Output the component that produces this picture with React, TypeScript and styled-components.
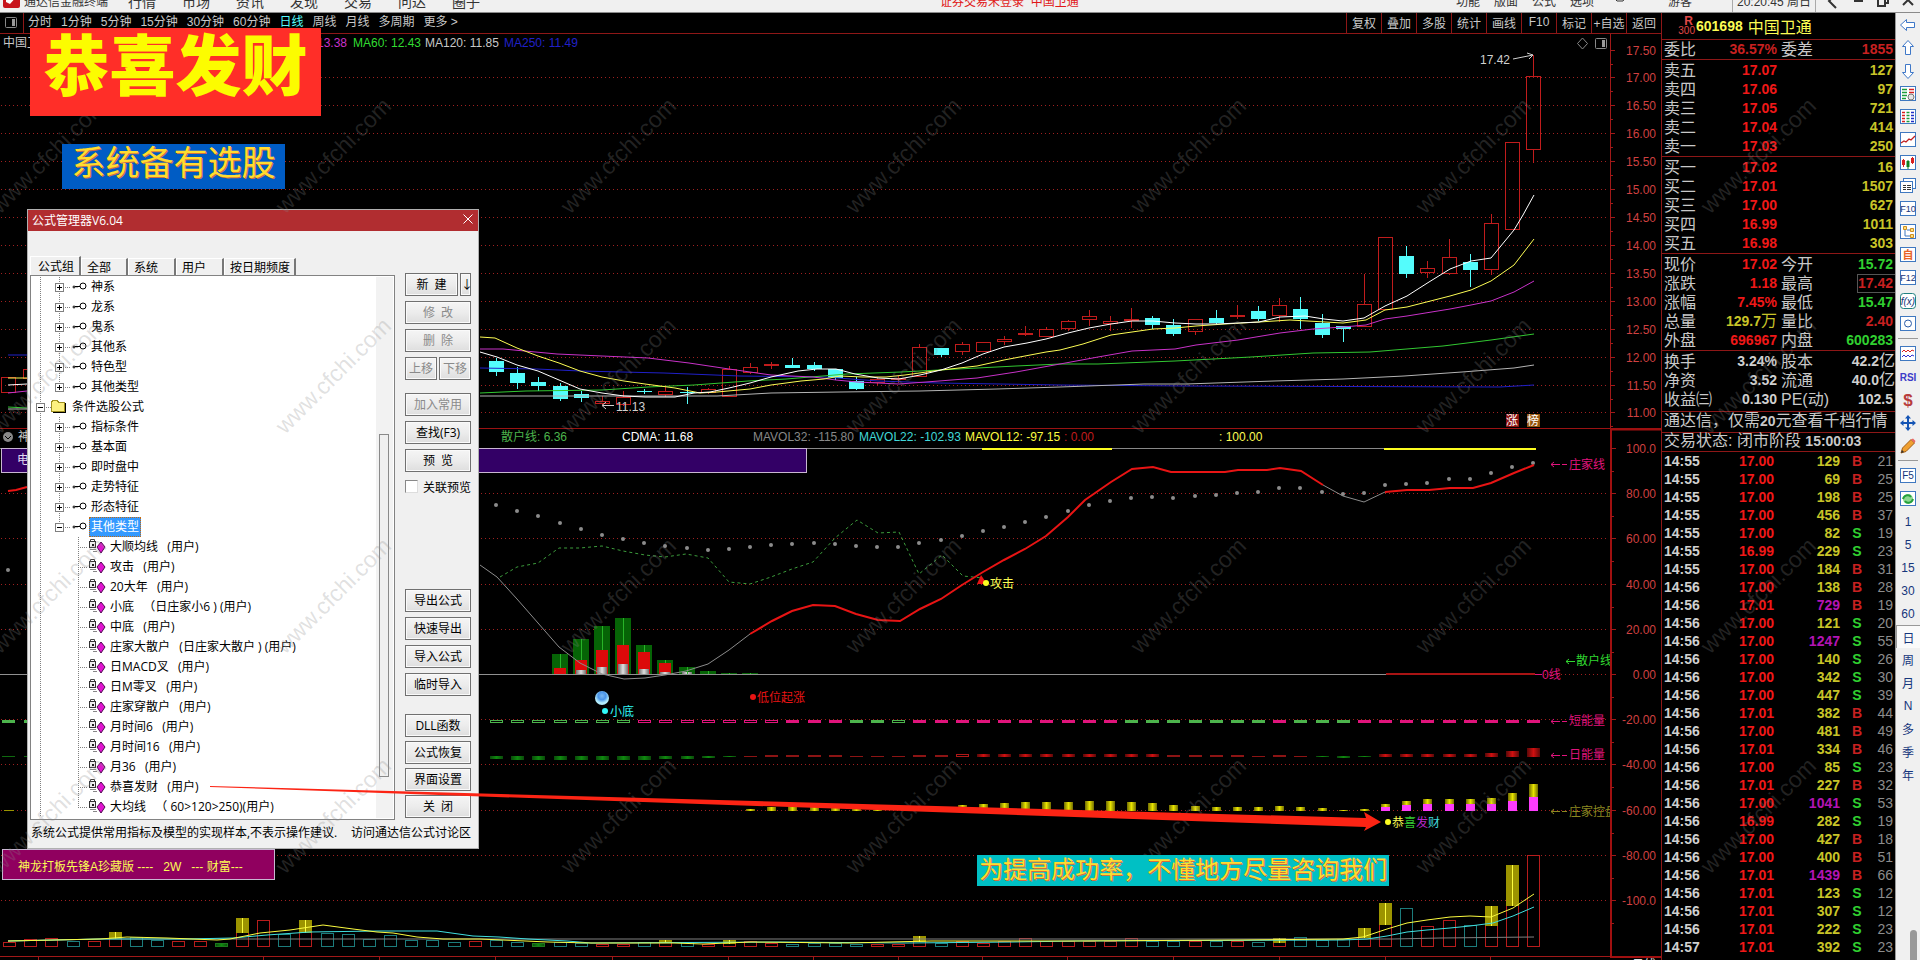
import React from "react";
import styled, { createGlobalStyle, css } from "styled-components";

const Global = createGlobalStyle`
  *, *::before, *::after { box-sizing: border-box; }
  html, body { margin: 0; background: #000; }
  body { font-family: "Liberation Sans", "Noto Sans CJK SC", sans-serif; font-size: 12px; overflow: hidden; }
  button { font-family: inherit; font-size: inherit; color: inherit; background: none; border: 0; padding: 0; margin: 0; }
  table { border-collapse: collapse; border-spacing: 0; table-layout: fixed; width: 100%; }
  td, th { padding: 0; font-weight: inherit; }
`;

const RED_LINE = "#8e1717";

/* ---------- page frame ---------- */

const Page = styled.div`
  position: relative;
  min-height: 100vh;
  overflow: hidden;
  background: #000;
`;

const TopBar = styled.header`
  display: flex;
  align-items: flex-end;
  height: 13px;
  overflow: hidden;
  background: #f0f0f0;
  border-bottom: 1px solid #8a8a8a;
  color: #333;
  line-height: 20px;
`;

const Logo = styled.svg`
  width: 17px;
  height: 20px;
  margin: 0 4px 0 3px;
  flex: none;
`;

const AppName = styled.span`
  width: 104px;
  flex: none;
`;

const MenuItem = styled.button`
  width: 54px;
  flex: none;
  text-align: left;
  font-size: 14px;
  line-height: 20px;
`;

const LoginState = styled.span`
  flex: 1;
  padding-left: 434px;
  color: #e01818;
  white-space: pre;
`;

const SmallMenuItem = styled.button<{ $w?: number }>`
  width: ${(p) => p.$w ?? 38}px;
  flex: none;
  text-align: left;
  line-height: 20px;
`;

const Clock = styled.span`
  width: 84px;
  flex: none;
  margin-right: 4px;
  padding-left: 4px;
  border: solid #aaa;
  border-width: 0 1px;
`;

const WindowButton = styled.button`
  width: 25px;
  height: 20px;
  flex: none;
`;

const Body = styled.div`
  display: grid;
  grid-template-columns: minmax(0, 1fr) 234px 25px;
`;

const Workspace = styled.main`
  min-width: 0;
`;

/* ---------- period bar ---------- */

const PeriodBar = styled.nav`
  display: flex;
  height: 21px;
  padding-bottom: 0;
  border-bottom: 1px solid ${RED_LINE};
  color: #c8c8c8;
  line-height: 18px;
`;

const LayoutToggle = styled.button`
  width: 24px;
  border-right: 1px solid ${RED_LINE};
  display: flex;
  align-items: center;
  justify-content: center;
`;

const Periods = styled.div`
  display: flex;
  align-items: flex-start;
  flex: 1;
  gap: 9px;
  padding-left: 4px;
`;

const Period = styled.button<{ $on?: boolean }>`
  color: ${(p) => (p.$on ? "#54fcfc" : "#c8c8c8")};
  white-space: pre;
  line-height: 19px;
`;

const Tool = styled.button`
  width: 35px;
  padding-bottom: 2px;
  border-left: 1px solid ${RED_LINE};
  white-space: nowrap;
`;

/* ---------- chart panels ---------- */

const Panel = styled.section`
  position: relative;
`;

const Legend = styled.div`
  position: absolute;
  top: 0;
  left: 0;
  display: flex;
  height: 18px;
  line-height: 18px;
  padding-left: 3px;
`;

const LegendItem = styled.span<{ $c: string; $w?: number }>`
  color: ${(p) => p.$c};
  white-space: pre;
  ${(p) => p.$w && css`width: ${p.$w}px;`}
`;

const Canvas = styled.svg`
  display: block;
  width: 100%;
  height: auto;
  font-size: 12px;
`;

/* ---------- quote column ---------- */

const Quote = styled.aside`
  border-left: 1px solid ${RED_LINE};
  color: #c8c8c8;
  font-size: 16px;
  overflow: hidden;
`;

const QuoteHead = styled.div`
  display: flex;
  align-items: center;
  height: 27px;
  border-bottom: 1px solid ${RED_LINE};
  color: #fcfc54;
  padding-left: 17px;
`;

const Tag = styled.span`
  display: flex;
  flex-direction: column;
  align-items: flex-end;
  width: 16px;
  color: #e04848;
  font-size: 10px;
  line-height: 10px;
  b { font-size: 12px; padding-right: 2px; }
`;

const Code = styled.b`
  font-size: 14px;
  padding: 0 5px 0 1px;
`;

const Group = styled.div<{ $top?: number; $bottom?: number }>`
  padding: ${(p) => p.$top ?? 0}px 0 ${(p) => p.$bottom ?? 0}px;
  border-bottom: 1px solid ${RED_LINE};
`;

const Row = styled.tr`
  height: 19px;
  line-height: 19px;
`;

const Label = styled.th<{ $gap?: number }>`
  text-align: left;
  white-space: nowrap;
  font-weight: 400;
  padding-left: ${(p) => p.$gap ?? 2}px;
`;

const Value = styled.td<{ $c: string; $edge?: boolean; $box?: boolean }>`
  text-align: right;
  white-space: nowrap;
  font-size: 14px;
  font-weight: 700;
  color: ${(p) => p.$c};
  padding-right: ${(p) => (p.$edge ? 2 : 0)}px;
  ${(p) => p.$box && css`
    background: linear-gradient(#555, #555) right top / 37px 1px no-repeat,
      linear-gradient(#555, #555) right bottom / 37px 1px no-repeat,
      linear-gradient(#555, #555) calc(100% - 37px) 0 / 1px 100% no-repeat;
  `}
`;

const Unit = styled.span`
  font-size: 16px;
  font-weight: 400;
  line-height: 1;
`;

const Notice = styled.div<{ $h: number }>`
  height: ${(p) => p.$h}px;
  line-height: ${(p) => p.$h - 3}px;
  padding-left: 2px;
  border-bottom: 1px solid ${RED_LINE};
  white-space: nowrap;
  b { font-size: 14px; }
`;

const Tick = styled.tr`
  height: 18px;
  line-height: 18px;
  font-size: 14px;
  font-weight: 700;
`;

const Cell = styled.td<{ $c: string; $align?: string; $thin?: boolean; $pad?: string }>`
  color: ${(p) => p.$c};
  text-align: ${(p) => p.$align ?? "right"};
  font-weight: ${(p) => (p.$thin ? 400 : 700)};
  padding: ${(p) => p.$pad ?? "0"};
`;

/* ---------- side toolbar ---------- */

const Side = styled.nav`
  position: relative;
  background: #f0f0f0;
  border-left: 1px solid #999;
  display: flex;
  flex-direction: column;
  color: #16367c;
`;

const SideButton = styled.button<{ $on?: boolean }>`
  display: flex;
  align-items: center;
  justify-content: center;
  height: 23px;
  flex: none;
  font-size: 12px;
  ${(p) => p.$on && css`
    background: #fafafa;
    border: solid #999;
    border-width: 1px 0 0 1px;
  `}
`;

const SideRule = styled.hr`
  width: 20px;
  height: 1px;
  flex: none;
  margin: 3px auto;
  border: 0;
  background: #999;
`;

const ScrollThumb = styled.div`
  position: absolute;
  right: 3px;
  bottom: 0;
  width: 7px;
  height: 30px;
  border-radius: 4px 4px 0 0;
  background: #999;
`;

/* ---------- overlays ---------- */

const Watermark = styled.svg`
  position: absolute;
  inset: 0;
  width: 100%;
  height: 100%;
  pointer-events: none;
`;

const Banner = styled.div<{ $x: number; $y: number; $w: number; $h: number; $bg: string }>`
  position: absolute;
  left: ${(p) => p.$x}px;
  top: ${(p) => p.$y}px;
  width: ${(p) => p.$w}px;
  height: ${(p) => p.$h}px;
  background: ${(p) => p.$bg};
  text-align: center;
  white-space: nowrap;
`;

const Fortune = styled(Banner)`
  color: #fcfc00;
  font-size: 66px;
  line-height: 66px;
  font-weight: 900;
  font-family: "Noto Sans CJK SC", sans-serif;
`;

const Slogan = styled(Banner)<{ $size: number; $lh: number }>`
  color: #ffdc30;
  font-size: ${(p) => p.$size}px;
  line-height: ${(p) => p.$lh}px;
  font-family: "Noto Sans CJK SC", sans-serif;
  text-shadow: 1px 1px 0 #d07040;
`;

const Plate = styled(Banner)<{ $lh: number }>`
  border: 1px solid #c9b6d2;
  color: #fcfc54;
  text-align: left;
  padding-left: 15px;
  line-height: ${(p) => p.$lh}px;
  white-space: pre;
`;

const ArrowLayer = styled.svg`
  position: absolute;
  left: 0;
  top: 0;
  width: 1400px;
  height: 840px;
  pointer-events: none;
`;

/* ---------- formula manager dialog ---------- */

const Dialog = styled.section`
  position: absolute;
  left: 27px;
  top: 209px;
  width: 452px;
  height: 640px;
  display: flex;
  flex-direction: column;
  background: #f0f0f0;
  border: 1px solid #b0b0b0;
  color: #000;
  font-family: "Open Sans", "Noto Sans CJK SC", sans-serif;
`;

const DialogTitle = styled.header`
  display: flex;
  justify-content: space-between;
  align-items: center;
  height: 21px;
  flex: none;
  padding: 0 5px 2px 4px;
  background: #b12d30;
  color: #fff;
`;

const DialogBody = styled.div`
  display: flex;
  flex: 1;
  padding: 25px 7px 0 2px;
  gap: 10px;
`;

const TreeSide = styled.div`
  flex: 1;
  display: flex;
  flex-direction: column;
`;

const Tabs = styled.div`
  display: flex;
  align-items: flex-end;
  height: 19px;
`;

const Tab = styled.button<{ $w: number; $on?: boolean }>`
  width: ${(p) => p.$w}px;
  height: ${(p) => (p.$on ? 19 : 17)}px;
  padding-left: ${(p) => (p.$on ? 7 : 5)}px;
  text-align: left;
  line-height: 17px;
  white-space: nowrap;
  border-left: 1px solid #fff;
  border-top: 1px solid #fff;
  border-right: 2px solid #777;
`;

const Tree = styled.ul`
  position: relative;
  height: 545px;
  margin: 0;
  padding: 1px 0 0;
  list-style: none;
  background: #fff;
  border: 1px solid #828282;
`;

const TreeRow = styled.li`
  display: flex;
  align-items: center;
  height: 20px;
`;

const TreeLabel = styled.span<{ $on?: boolean }>`
  height: 20px;
  line-height: 20px;
  padding: 0 2px;
  white-space: pre;
  ${(p) => p.$on && css`
    background: #3399ff;
    color: #fff;
    outline: 1px dotted #c46a10;
    outline-offset: -1px;
  `}
`;

const Track = styled.div`
  position: absolute;
  top: 1px;
  right: 1px;
  bottom: 1px;
  width: 17px;
  background: #f2f2f2;
`;

const Thumb = styled.div`
  position: absolute;
  left: 3px;
  top: 157px;
  width: 10px;
  height: 343px;
  border: 1px solid #8a8a8a;
  background: #f0f0f0;
`;

const Actions = styled.div`
  width: 66px;
  padding-top: 17px;
  display: flex;
  flex-direction: column;
`;

const ActionGroup = styled.div<{ $gap: number; $after: number }>`
  display: flex;
  flex-direction: column;
  gap: ${(p) => p.$gap}px;
  margin-bottom: ${(p) => p.$after}px;
`;

const ActionPair = styled.div<{ $cols: string }>`
  display: grid;
  grid-template-columns: ${(p) => p.$cols};
  gap: 2px;
`;

const Action = styled.button`
  height: 23px;
  line-height: 19px;
  white-space: pre;
  border: 1px solid #707070;
  background: linear-gradient(#f5f5f5, #ececec 50%, #dedede);
  box-shadow: inset 0 0 0 1px #fafafa;
  color: #000;
  &:disabled { color: #8a8a8a; }
`;

const CheckLabel = styled.label`
  display: flex;
  align-items: center;
  gap: 5px;
  height: 19px;
  white-space: nowrap;
  input {
    appearance: none;
    width: 13px;
    height: 13px;
    margin: 0;
    flex: none;
    background: #fff;
    border: 1px solid #888;
    border-right-color: #ddd;
    border-bottom-color: #ddd;
  }
`;

const DialogFoot = styled.footer`
  display: flex;
  justify-content: space-between;
  height: 29px;
  line-height: 25px;
  padding: 0 7px 0 3px;
  white-space: nowrap;
  a { color: #000; text-decoration: none; }
`;

/* ---------- chart data ---------- */

const cx = (i: number) => 496 + Math.round(i * 21.17);

type Candle = [string, number, number, number, number];
// kind (r = hollow rise, c = filled fall), body top, body bottom, high, low
const candles: Candle[] = [
  ["c", 361, 372, 358, 376], ["c", 373, 383, 367, 389], ["c", 382, 386, 377, 391], ["c", 386, 399, 383, 401],
  ["c", 394, 398, 391, 402], ["r", 401, 404, 396, 406], ["r", 397, 405, 391, 406], ["c", 391, 392, 389, 394],
  ["r", 391, 395, 387, 397], ["c", 392, 393, 387, 404], ["r", 389, 393, 388, 394], ["r", 369, 397, 366, 397],
  ["r", 367, 373, 363, 374], ["r", 364, 366, 362, 369], ["c", 365, 368, 358, 368], ["c", 365, 369, 362, 371],
  ["c", 369, 378, 369, 380], ["c", 381, 389, 377, 390], ["r", 379, 383, 377, 385], ["r", 378, 379, 375, 383],
  ["r", 347, 377, 344, 377], ["c", 348, 355, 348, 357], ["r", 344, 352, 342, 355], ["r", 342, 352, 342, 352],
  ["r", 339, 342, 336, 345], ["r", 333, 335, 326, 336], ["r", 329, 337, 327, 337], ["r", 321, 329, 320, 331],
  ["r", 316, 320, 310, 326], ["r", 321, 324, 316, 331], ["r", 319, 321, 308, 328], ["c", 318, 325, 316, 329],
  ["c", 325, 334, 319, 336], ["r", 319, 332, 319, 335], ["c", 318, 323, 310, 324], ["r", 315, 317, 305, 319],
  ["c", 311, 319, 306, 321], ["r", 305, 316, 298, 322], ["c", 309, 319, 297, 329], ["c", 323, 335, 314, 338],
  ["c", 326, 329, 326, 342], ["r", 304, 327, 274, 327], ["r", 237, 310, 237, 310], ["c", 256, 274, 246, 278],
  ["r", 268, 273, 261, 278], ["r", 257, 274, 239, 275], ["c", 262, 270, 254, 287], ["r", 223, 270, 214, 275],
  ["r", 142, 230, 142, 230], ["r", 76, 150, 55, 163],
];

const movingAverages: [string, string][] = [
  ["#2020c8", "8,355 27,355"],
  ["#fcfc54", "8,378 27,378"],
  ["#ffffff", "8,385 27,384"],
  ["#c832c8", "8,393 27,391"],
  ["#32c832", "8,407 27,408"],
  ["#b4b4b4", "8,409 27,409"],
  ["#2020c8", "480,368 537,369 580,371 664,373 740,376 824,377 878,381 939,383 1060,385 1186,386 1500,387 1534,385"],
  ["#b4b4b4", "480,396 717,396 771,393 840,392 920,391 997,389 1060,387 1144,384 1186,384 1274,381 1343,379 1404,376 1462,372 1514,368 1534,365"],
  ["#32c832", "480,393 526,391 602,390 648,387 694,385 748,381 786,379 847,374 901,372 958,369 1016,366 1060,364 1098,364 1175,361 1251,357 1313,353 1370,352 1443,346 1491,340 1534,334"],
  ["#c832c8", "480,349 503,349 557,354 602,356 648,358 689,363 729,369 771,375 813,377 836,380 857,382 899,384 939,381 977,378 1016,372 1060,364 1098,357 1132,351 1175,349 1196,345 1238,340 1280,333 1313,329 1343,327 1366,325 1385,319 1407,316 1450,309 1471,305 1491,301 1514,292 1534,281"],
  ["#fcfc54", "480,337 495,338 517,348 538,356 559,363 580,371 602,377 624,381 645,384 675,388 700,393 717,392 750,389 771,385 801,381 824,379 840,376 863,377 886,377 905,375 941,370 977,366 1004,360 1046,352 1060,350 1083,344 1111,335 1132,332 1153,329 1175,328 1196,326 1225,324 1259,322 1290,320 1343,323 1366,320 1385,310 1407,307 1450,296 1471,290 1491,281 1514,265 1534,239"],
  ["#ffffff", "480,352 497,357 517,365 538,371 559,380 580,389 602,393 624,396 645,397 675,397 694,393 710,392 729,388 750,383 771,377 798,371 817,369 836,369 855,374 878,378 899,379 920,375 941,370 962,363 983,354 1004,347 1027,343 1046,339 1068,333 1089,328 1111,324 1132,321 1153,321 1175,323 1196,324 1217,324 1238,323 1259,322 1280,317 1305,316 1324,319 1343,321 1364,318 1385,306 1407,296 1429,282 1450,269 1471,261 1491,258 1514,230 1523,215 1534,195"],
];

const prices = ["17.50", "17.00", "16.50", "16.00", "15.50", "15.00", "14.50", "14.00", "13.50", "13.00", "12.50", "12.00", "11.50", "11.00"];
const levels = ["100.0", "80.00", "60.00", "40.00", "20.00", "0.00", "-20.00", "-40.00", "-60.00", "-80.00", "-100.0"];

const dotY = [
  505, 511, 516, 523, 529, 535, 539, 543, 546, 548, 550, 549, 547, 545, 544, 543, 544, 546, 547, 547, 543, 540, 536, 531, 527,
  522, 517, 511, 505, 501, 498, 497, 498, 496, 495, 493, 492, 488, 488, 492, 494, 493, 485, 484, 483, 479, 479, 473, 467, 463,
];

// stacked bars above the zero line: index, top, red top, grey top
const stacks: [number, number, number, number][] = [
  [3, 654, 668, 674], [4, 639, 660, 670], [5, 626, 650, 667], [6, 618, 645, 664], [7, 645, 652, 669],
  [8, 660, 663, 672], [9, 667, 674, 672], [10, 671, 674, 674], [11, 673, 674, 674], [12, 673, 674, 674],
];

// g / p = green / pink, capital = outlined
const shortEnergy = "GGGGGGGPPPPPPPpppggGppppppppppgggggggpgggppppppppp".split("");

// day energy: colour, top, height
const dayEnergy: [string, number, number][] = [
  ["g", 756, 3], ["g", 756, 4], ["g", 756, 4], ["g", 756, 4], ["g", 756, 4], ["g", 756, 4], ["g", 756, 4], ["g", 756, 4],
  ["g", 756, 3], ["g", 756, 3], ["g", 756, 2], ["g", 756, 1], ["d", 756, 1], ["d", 755, 2], ["d", 755, 2], ["d", 755, 2],
  ["d", 755, 2], ["d", 756, 1], ["d", 756, 1], ["d", 756, 1], ["d", 755, 2], ["d", 755, 2], ["o", 754, 2], ["r", 754, 3],
  ["r", 754, 3], ["r", 754, 3], ["r", 754, 3], ["r", 754, 3], ["r", 754, 3], ["r", 754, 3], ["r", 754, 3], ["r", 754, 3],
  ["d", 755, 2], ["d", 755, 2], ["d", 755, 2], ["d", 755, 2], ["d", 756, 1], ["d", 755, 2], ["d", 756, 1], ["g", 756, 1],
  ["g", 756, 2], ["g", 756, 1], ["r", 754, 3], ["r", 754, 3], ["r", 754, 3], ["r", 754, 3], ["r", 754, 3], ["r", 753, 4],
  ["r", 751, 6], ["r", 748, 9],
];

// control bars: index, yellow top, pink top
const control: [number, number, number][] = [
  [12, 809, 811], [13, 807, 811], [14, 805, 811], [15, 807, 811], [16, 808, 811], [17, 809, 811], [18, 810, 811],
  [22, 805, 811], [23, 804, 811], [24, 803, 811], [25, 802, 811], [26, 802, 811], [27, 802, 811], [28, 801, 811],
  [29, 801, 811], [30, 802, 811], [31, 803, 811], [32, 805, 811], [33, 806, 811], [34, 807, 811], [35, 807, 811],
  [36, 807, 811], [37, 806, 811], [38, 807, 811], [39, 808, 811], [40, 810, 811], [41, 809, 811], [42, 804, 807],
  [43, 801, 805], [44, 799, 804], [45, 799, 804], [46, 799, 804], [47, 798, 804], [48, 793, 801], [49, 784, 797],
];

// volume: kind (r / c outlined, g filled green), top, bottom of the yellow cap
const volume: [string, number, number?][] = [
  ["r", 942], ["r", 939], ["r", 938], ["c", 941], ["r", 941], ["r", 932, 939], ["c", 937], ["c", 940], ["r", 941], ["r", 941],
  ["g", 943], ["r", 918, 933], ["r", 920], ["c", 934], ["r", 920, 933], ["c", 933], ["c", 934], ["c", 939], ["c", 935],
  ["c", 940], ["c", 940], ["c", 942], ["r", 941],
  ["c", 940], ["c", 942], ["g", 943], ["c", 942], ["c", 943], ["r", 944], ["r", 944], ["c", 942], ["r", 940, 943], ["c", 942],
  ["r", 944], ["r", 940, 944], ["r", 941], ["r", 943], ["c", 944], ["c", 943], ["c", 943], ["c", 944], ["r", 944], ["r", 944],
  ["r", 936, 942], ["c", 943], ["r", 941], ["r", 943], ["r", 941], ["r", 938], ["r", 941], ["r", 941], ["r", 941], ["r", 941],
  ["r", 938], ["c", 941], ["c", 941], ["r", 941], ["c", 941], ["r", 941], ["c", 942], ["r", 938, 943], ["c", 937], ["c", 940],
  ["c", 939], ["r", 928, 938], ["r", 903, 925], ["c", 908], ["r", 926], ["r", 920], ["c", 925], ["r", 906, 926], ["r", 865, 906],
  ["r", 855],
];

function CandleShape({ i, d }: { i: number; d: Candle }) {
  const [kind, top, bottom, high, low] = d;
  const x = cx(i);
  if (kind === "c")
    return (
      <g fill="#54fcfc">
        <rect x={x} y={high} width={1} height={low - high} />
        <rect x={x - 7} y={top} width={15} height={bottom - top} />
      </g>
    );
  return (
    <g stroke="#c01c1c" fill="none" shapeRendering="crispEdges">
      <path d={`M${x + 0.5} ${high}V${top}M${x + 0.5} ${bottom}V${low}`} />
      <rect x={x - 6.5} y={top + 0.5} width={14} height={Math.max(1, bottom - top - 1)} />
    </g>
  );
}

function PriceChart() {
  return (
    <Canvas viewBox="0 34 1661 394" role="img" aria-label="日线">
      {prices.map((p, k) => {
        const y = k === 0 ? 50 : k === 13 ? 412 : 49 + 28 * k;
        return (
          <g key={p}>
            {k > 0 && <line x1={1} x2={1607} y1={y + 0.5} y2={y + 0.5} stroke="#a02020" strokeDasharray="1 3" />}
            <path d={`M1610 ${y + 0.5}h5M1610 ${y + 14.5}h3`} stroke="#a01818" />
            <text x={1656} y={y + 5} textAnchor="end" fill="#d04040">{p}</text>
          </g>
        );
      })}
      <line x1={1610.5} x2={1610.5} y1={34} y2={428} stroke="#a01818" />
      <rect x={1.5} y={377.5} width={14} height={15} fill="none" stroke="#c01c1c" />
      <rect x={23.5} y={369.5} width={14} height={9} fill="none" stroke="#c01c1c" />
      {candles.map((d, i) => <CandleShape key={i} i={i} d={d} />)}
      {movingAverages.map(([c, pts], i) => <polyline key={i} points={pts} fill="none" stroke={c} />)}
      <g fill="#d0d0d0">
        <text x={1480} y={64}>17.42</text>
        <text x={616} y={411}>11.13</text>
      </g>
      <g stroke="#d0d0d0" fill="none">
        <path d="M1513 59L1533 55M1527 53l6 2l-4 4" />
        <path d="M614 405.5H603M606 402l-4 3.5l4 3.5" />
      </g>
      <path d="M1582.500 38l5 5.500l-5 5.500l-5-5.500z" fill="none" stroke="#888" />
      <rect x={1595.500} y={38.500} width={11} height={10} rx={1} fill="none" stroke="#888" />
      <rect x={1602} y={40} width={3} height={7} fill="#999" />
      <rect x={1506} y={414} width={13} height={13} fill="#8a1010" />
      <text x={1506} y={425} fill="#fff">涨</text>
      <rect x={1527} y={414} width={13} height={13} fill="#96540e" />
      <text x={1527} y={425} fill="#fff">榜</text>
    </Canvas>
  );
}

function IndicatorChart() {
  return (
    <Canvas viewBox="0 428 1661 532" role="img" aria-label="散户线">
      <defs>
        <linearGradient id="green"><stop offset="0" stopColor="#0a4a0a" /><stop offset=".5" stopColor="#0f8a0f" /><stop offset="1" stopColor="#0a4a0a" /></linearGradient>
        <linearGradient id="red"><stop offset="0" stopColor="#5a0808" /><stop offset=".5" stopColor="#d01010" /><stop offset="1" stopColor="#5a0808" /></linearGradient>
        <linearGradient id="gold"><stop offset="0" stopColor="#706c00" /><stop offset=".5" stopColor="#e8e400" /><stop offset="1" stopColor="#706c00" /></linearGradient>
        <linearGradient id="silver"><stop offset="0" stopColor="#707070" /><stop offset=".5" stopColor="#e0e0e0" /><stop offset="1" stopColor="#707070" /></linearGradient>
        <radialGradient id="ball" cy=".35"><stop offset="0" stopColor="#7ab8f0" /><stop offset=".55" stopColor="#4a94e8" /><stop offset="1" stopColor="#b4ecfc" /></radialGradient>
        <clipPath id="plot"><rect x={0} y={428} width={1610} height={532} /></clipPath>
      </defs>
      <path d="M0 428.500H1661" stroke="#9a1212" />
      <path d="M1661 429.500H1611V957H1661" fill="none" stroke="#a01010" strokeWidth={2} />
      <path d="M0 956.500H1611" stroke="#a01818" />
      {[38, 263, 379, 495, 612, 728, 813, 898, 982, 1067, 1173, 1279, 1385, 1490].map((x) => (
        <path key={x} d={`M${x}.5 957v3`} stroke="#a01818" />
      ))}
      <text x={1632} y={969} fill="#e0e0e0">日线</text>
      {levels.map((l, k) => {
        const y = Math.round(448 + 45.2 * k);
        return (
          <g key={l}>
            {k > 0 && <line x1={1} x2={1607} y1={y + 0.5} y2={y + 0.5} stroke="#a02020" strokeDasharray="1 3" />}
            <path d={`M1611 ${y + 0.5}h5M1611 ${y + 23.5}h3`} stroke="#a01818" />
            <text x={1656} y={y + 5} textAnchor="end" fill="#d04040">{l}</text>
          </g>
        );
      })}
      <g shapeRendering="crispEdges">
        <rect x={0} y={448} width={1384} height={1} fill="#888" />
        <rect x={982} y={448} width={130} height={2} fill="#fcfc20" />
        <rect x={1384} y={448} width={152} height={2} fill="#fcfc20" />
        <rect x={0} y={674} width={1386} height={1} fill="#909090" />
        <rect x={1386} y={673} width={149} height={2} fill="#a81414" />
      </g>
      {stacks.map(([i, t, r, g]) => (
        <g key={i}>
          <rect x={cx(i) - 8} y={t} width={16} height={674 - t} fill="#066406" />
          <rect x={cx(i) - 6} y={r} width={12} height={674 - r} fill="#dc0a0a" />
          <rect x={cx(i) - 5} y={g} width={10} height={674 - g} fill="url(#silver)" />
          <rect x={cx(i)} y={t} width={1} height={r - t} fill="#28b428" />
        </g>
      ))}
      <circle cx={8} cy={570} r={2} fill="#888" />
      {dotY.map((y, i) => <circle key={i} cx={cx(i)} cy={y} r={2} fill="#8c8c8c" />)}
      <polyline fill="none" stroke="#3c9c3c" strokeDasharray="3 3" points="500,577 517,567 538,563 559,548 580,548 602,546 623,551 645,555 665,557 686,554 708,558 729,582 750,584 771,577 792,569 813,562 835,538 857,520 878,533 899,532 919,574 942,555 963,576 983,578" />
      <polyline fill="none" stroke="#8c8c8c" points="480,565 497,577 517,599 538,623 559,647 580,663 602,674 624,679 645,678 665,675 686,671 708,664 729,650 750,634" />
      <polyline fill="none" stroke="#8c8c8c" points="1323,485 1343,496 1364,502 1385,492" />
      <g fill="none" stroke="#e81414" strokeWidth={2}>
        <polyline points="8,491 16,490 27,487" />
        <polyline points="750,634 772,621 792,611 813,605 835,606 856,614 878,620 900,621 920,609 941,599 962,585 983,572 1004,560 1025,549 1046,536 1068,517 1085,500 1111,482 1132,469 1153,467 1171,472 1225,472 1238,470 1267,470 1280,468 1301,471 1323,485" />
        <polyline points="1385,492 1407,490 1429,490 1450,488 1473,488 1491,483 1514,473 1534,465" />
      </g>
      <path d="M977 584l4-9l6 9z" fill="#e81414" />
      <circle cx={986} cy={583} r={3} fill="#fcfc20" />
      <text x={990} y={588} fill="#fcfc54">攻击</text>
      <circle cx={602} cy={698} r={7} fill="url(#ball)" />
      <circle cx={605} cy={711} r={3} fill="#30f8f8" />
      <text x={610} y={716} fill="#30f8f8">小底</text>
      <circle cx={753} cy={697} r={3} fill="#e81414" />
      <text x={757} y={702} fill="#e81414">低位起涨</text>

      <g shapeRendering="crispEdges">
        <rect x={2} y={720} width={13} height={3} fill="#4cb44c" />
        <rect x={24} y={720} width={8} height={3} fill="#4cb44c" />
        <rect x={2} y={756} width={13} height={1} fill="#0f6a0f" />
        <rect x={24} y={756} width={8} height={1} fill="#0f6a0f" />
        <rect x={4} y={810} width={10} height={1} fill="#9a9400" />
        {shortEnergy.map((k, i) => {
          const c = k.toLowerCase() === "g" ? "#4cb44c" : "#e0147c";
          return k === k.toUpperCase()
            ? <rect key={i} x={cx(i) - 5.5} y={720.5} width={12} height={2} fill="none" stroke={c} />
            : <rect key={i} x={cx(i) - 6} y={720} width={13} height={3} fill={c} />;
        })}
        {dayEnergy.map(([k, y, h], i) =>
          k === "o"
            ? <rect key={i} x={cx(i) - 5.5} y={y + 0.5} width={12} height={h} fill="none" stroke="#b01818" />
            : <rect key={i} x={cx(i) - 6} y={y} width={13} height={h} fill={k === "g" ? "url(#green)" : k === "d" ? "#8c1414" : "url(#red)"} />
        )}
        {control.map(([i, y, p]) => (
          <g key={i}>
            <rect x={cx(i) - 4} y={y} width={9} height={p - y} fill="url(#gold)" />
            <rect x={cx(i) - 4} y={p} width={9} height={811 - p} fill="#fc3cfc" />
          </g>
        ))}
        {volume.map(([k, y, cap], n) => {
          const x = cx(n - 23);
          return (
            <g key={n}>
              <rect x={x - 5.5} y={y + 0.5} width={12} height={946 - y} fill={k === "g" ? "url(#green)" : "none"} stroke={k === "r" ? "#b81c1c" : k === "g" ? "#1c7a1c" : "#1c7c7c"} />
              {cap && <rect x={x - 6} y={y} width={13} height={cap - y} fill="#9c9400" />}
              {cap && <rect x={x} y={y} width={1} height={cap - y} fill="#fcfc40" />}
            </g>
          );
        })}
      </g>
      <g fill="none">
        <polyline stroke="#808080" points="8,941 100,939 230,939 1393,939 1440,938 1534,937" />
        <polyline stroke="#40e0e0" points="8,941 100,939 143,939 187,939 233,938 267,935 310,932 377,931 437,931 473,936 499,937 528,939 567,941 591,943 780,942 906,943 1013,942 1076,941 1343,940 1367,939 1387,936 1407,932 1427,930 1450,928 1470,926 1493,923 1513,916 1534,907" />
        <polyline stroke="#fcfc40" points="8,941 100,939 127,937 167,938 217,940 230,939 260,933 290,930 323,925 353,929 377,932 393,933 417,937 443,939 480,939 548,942 591,943 674,943 703,944 751,942 848,943 931,941 1076,941 1240,940 1343,939 1363,937 1387,929 1407,923 1427,920 1450,917 1470,916 1491,917 1513,908 1534,894" />
      </g>

      <circle cx={1388} cy={822} r={3} fill="#fcfc20" />
      <text x={1392} y={827}>
        <tspan fill="#fcfc54">恭</tspan><tspan fill="#32c832">喜</tspan><tspan fill="#b428c8">发</tspan><tspan fill="#40d8d8">财</tspan>
      </text>
      <g clipPath="url(#plot)">
        <g fill="#e0147c">
          <text x={1569} y={469}>庄家线</text>
          <text x={1569} y={725}>短能量</text>
          <text x={1569} y={759}>日能量</text>
          <text x={1542} y={679}>0线</text>
        </g>
        <g stroke="#e0147c" fill="none">
          <path d="M1567 464.500h-5m-2 0h-9M1554 462l-3 2.500l3 2.500" />
          <path d="M1567 721.500h-5m-2 0h-9M1554 719l-3 2.500l3 2.500" />
          <path d="M1567 755.500h-5m-2 0h-9M1554 753l-3 2.500l3 2.500" />
          <path d="M1535 674.500h7" />
        </g>
        <text x={1576} y={665} fill="#30d830">散户线</text>
        <path d="M1575 661.500H1566M1569 659l-3 2.500l3 2.500" stroke="#30d830" fill="none" />
        <text x={1569} y={816} fill="#8c8820">庄家控盘</text>
        <path d="M1567 811.500h-5m-2 0h-9M1554 809l-3 2.500l3 2.500" stroke="#8c8820" fill="none" />
      </g>
    </Canvas>
  );
}

/* ---------- quote data ---------- */

const RED = "#f01818";
const DRED = "#c82020";
const YEL = "#c8c428";
const GRN = "#30d030";
const PUR = "#b414b4";
const WHT = "#d0d0d0";

const asks = [["卖五", "17.07", "127"], ["卖四", "17.06", "97"], ["卖三", "17.05", "721"], ["卖二", "17.04", "414"], ["卖一", "17.03", "250"]];
const bids = [["买一", "17.02", "16"], ["买二", "17.01", "1507"], ["买三", "17.00", "627"], ["买四", "16.99", "1011"], ["买五", "16.98", "303"]];

type Stat = [string, string, string, string, string, string, string?, string?];
// label, value, colour, label, value, colour, unit of the first value, unit of the second
const stats: Stat[] = [
  ["现价", "17.02", RED, "今开", "15.72", GRN],
  ["涨跌", "1.18", RED, "最高", "17.42", DRED],
  ["涨幅", "7.45%", RED, "最低", "15.47", GRN],
  ["总量", "129.7", YEL, "量比", "2.40", DRED, "万"],
  ["外盘", "696967", RED, "内盘", "600283", GRN],
];
const fundamentals: Stat[] = [
  ["换手", "3.24%", WHT, "股本", "42.2", WHT, "", "亿"],
  ["净资", "3.52", WHT, "流通", "40.0", WHT, "", "亿"],
  ["收益㈢", "0.130", WHT, "PE(动)", "102.5", WHT],
];

const ticks = `14:55 17.00 129 B 21|14:55 17.00 69 B 25|14:55 17.00 198 B 25|14:55 17.00 456 B 37|14:55 17.00 82 S 19|14:55 16.99 229 S 23|14:55 17.00 184 B 31|14:56 17.00 138 B 28|14:56 17.01 729 B 19|14:56 17.00 121 S 20|14:56 17.00 1247 S 55|14:56 17.00 140 S 26|14:56 17.00 342 S 30|14:56 17.00 447 S 39|14:56 17.01 382 B 44|14:56 17.00 481 B 49|14:56 17.01 334 B 46|14:56 17.00 85 S 23|14:56 17.01 227 B 32|14:56 17.00 1041 S 53|14:56 16.99 282 S 19|14:56 17.00 427 B 18|14:56 17.00 400 B 51|14:56 17.01 1439 B 66|14:56 17.01 123 S 12|14:56 17.01 307 S 12|14:56 17.01 222 S 23|14:57 17.01 392 S 23`
  .split("|").map((r) => r.split(" "));

function Depth({ rows }: { rows: string[][] }) {
  return (
    <Group $top={1}>
      <table>
        <colgroup><col style={{ width: 50 }} /><col style={{ width: 65 }} /><col /></colgroup>
        <tbody>
          {rows.map(([l, p, v]) => (
            <Row key={l}>
              <Label scope="row">{l}</Label>
              <Value $c={RED}>{p}</Value>
              <Value $c={YEL} $edge>{v}</Value>
            </Row>
          ))}
        </tbody>
      </table>
    </Group>
  );
}

function Stats({ rows, top, bottom }: { rows: Stat[]; top?: number; bottom?: number }) {
  return (
    <Group $top={top} $bottom={bottom}>
      <table>
        <colgroup><col style={{ width: 50 }} /><col style={{ width: 65 }} /><col style={{ width: 50 }} /><col /></colgroup>
        <tbody>
          {rows.map(([l, v, c, l2, v2, c2, u, u2]) => (
            <Row key={l}>
              <Label scope="row">{l}</Label>
              <Value $c={c}>{v}{u && <Unit>{u}</Unit>}</Value>
              <Label scope="row" $gap={4}>{l2}</Label>
              <Value $c={c2} $edge={!u2} $box={v2 === "17.42"}>{v2}{u2 && <Unit>{u2}</Unit>}</Value>
            </Row>
          ))}
        </tbody>
      </table>
    </Group>
  );
}

function QuotePanel() {
  return (
    <Quote>
      <QuoteHead>
        <Tag><b>R</b>300</Tag>
        <Code>601698</Code>中国卫通
      </QuoteHead>
      <Stats rows={[["委比", "36.57%", DRED, "委差", "1855", DRED]]} />
      <Depth rows={asks} />
      <Depth rows={bids} />
      <Stats rows={stats} top={1} />
      <Stats rows={fundamentals} top={1} bottom={2} />
      <Notice $h={21}>通达信，仅需<b>20</b>元查看千档行情</Notice>
      <Notice $h={19}>交易状态: 闭市阶段 <b>15:00:03</b></Notice>
      <table>
        <colgroup>
          <col style={{ width: 50 }} /><col style={{ width: 62 }} /><col style={{ width: 66 }} /><col style={{ width: 34 }} /><col />
        </colgroup>
        <tbody>
          {ticks.map(([t, p, v, s, n], i) => (
            <Tick key={i}>
              <Cell $c={WHT} $align="left" $pad="0 0 0 2px">{t}</Cell>
              <Cell $c={RED}>{p}</Cell>
              <Cell $c={v.length > 3 || v === "729" ? PUR : YEL}>{v}</Cell>
              <Cell $c={s === "B" ? DRED : GRN} $align="center">{s}</Cell>
              <Cell $c="#8c8c8c" $thin $pad="0 2px 0 0">{n}</Cell>
            </Tick>
          ))}
        </tbody>
      </table>
    </Quote>
  );
}

/* ---------- side toolbar ---------- */

function Glyph({ children, frame, label }: { children: React.ReactNode; frame?: boolean; label?: string }) {
  return (
    <svg width={18} height={18} viewBox="0 0 18 18" fill="none" aria-label={label}>
      {frame && <rect x={1.500} y={1.500} width={15} height={14} fill="#fff" stroke="#3f78c0" />}
      {children}
    </svg>
  );
}

const glyphText = { fontSize: 10, textAnchor: "middle" as const, fill: "#16367c" };

const sideIcons: React.ReactNode[] = [
  <Glyph label="后退"><path d="M1.500 9l6-5.500v3h8v5h-8v3z" fill="#fff" stroke="#3f78c8" /></Glyph>,
  <Glyph label="上"><path d="M9 1.500l5.500 6h-3v8h-5v-8h-3z" fill="#fff" stroke="#3f78c8" /></Glyph>,
  <Glyph label="下"><path d="M9 16.500l5.500-6h-3v-8h-5v8h-3z" fill="#fff" stroke="#3f78c8" /></Glyph>,
  <Glyph frame label="报价"><path d="M3 4.500h5M3 7.500h5M3 10.500h5M3 13.500h4" stroke="#1c9c3c" strokeWidth={1.500} /><path d="M10 4.500h5M10 7.500h5" stroke="#d82020" strokeWidth={1.500} /><circle cx={12} cy={12} r={3} fill="#e4e4e4" stroke="#777" /></Glyph>,
  <Glyph frame label="列表"><path d="M3 4.500h3M3 7.500h3M3 10.500h3M3 13.500h3" stroke="#d82020" strokeWidth={1.500} /><path d="M7.500 4.500h3M7.500 7.500h3M7.500 10.500h3M7.500 13.500h3" stroke="#1c9c3c" strokeWidth={1.500} /><path d="M12 4.500h3M12 7.500h3M12 10.500h3M12 13.500h3" stroke="#2030c8" strokeWidth={1.500} /></Glyph>,
  <Glyph frame label="分时"><path d="M2 12l3-2l2 1l3-3l2 1l4-4" stroke="#c02020" strokeWidth={1.300} /></Glyph>,
  <Glyph frame label="K线"><path d="M4.500 5v8M13.500 3v7" stroke="#d82020" /><path d="M3 6h3v5H3zM12 4h3v5h-3z" fill="#d82020" /><path d="M9 6v9" stroke="#108020" /><path d="M7.500 7h3v6h-3z" fill="#108020" /></Glyph>,
  <Glyph label="资料"><rect x={4.500} y={1.500} width={12} height={10} fill="#fff" stroke="#3f78c0" /><rect x={1.500} y={4.500} width={12} height={11} fill="#fff" stroke="#3f78c0" /><path d="M4 8.500h3M8 8.500h4M4 10.500h3M8 10.500h4M4 12.500h3M8 12.500h4" stroke="#333" /></Glyph>,
  <Glyph frame><text x={9} y={12} {...glyphText} fontSize={9}>F10</text></Glyph>,
  <Glyph frame label="结构"><path d="M4.500 3.500h3v3h-3zM11.500 5.500h3v3h-3zM11.500 11.500h3v3h-3z" fill="#fce080" stroke="#d09020" /><path d="M6 7v6h5M8 7h3" stroke="#3f78c0" /></Glyph>,
  <Glyph frame><text x={9} y={13} {...glyphText} fontSize={11} fontWeight={700} fill="#e86428">自</text></Glyph>,
  <Glyph frame><text x={9} y={12} {...glyphText} fontSize={9}>F12</text></Glyph>,
  <Glyph label="函数"><rect x={1.500} y={1.500} width={15} height={15} rx={3} fill="#fff" stroke="#208080" /><text x={9} y={13} {...glyphText} fontStyle="italic">f(x)</text></Glyph>,
  <Glyph frame label="圆"><circle cx={9} cy={8.500} r={3.500} stroke="#2c5ca8" /></Glyph>,
];

const sideIcons2: React.ReactNode[] = [
  <Glyph frame label="叠加"><path d="M3 7l2-2l2 2l2-2l2 2l2-2l2 1" stroke="#d82020" /><path d="M3 12l2-2l2 2l2-2l2 2l2-2l2 1" stroke="#3030d0" /></Glyph>,
  <Glyph><text x={9} y={13} {...glyphText} fontSize={10} fontWeight={700} fill="#3c3cc8">RSI</text></Glyph>,
  <Glyph><text x={9} y={15} {...glyphText} fontSize={17} fontWeight={700} fill="#b83c3c">$</text></Glyph>,
  <Glyph label="移动"><path d="M9 1l3 3.500h-2V8h3.500V6L17 9l-3.500 3v-2H10v3.500h2L9 17l-3-3.500h2V10H4.500v2L1 9l3.500-3v2H8V4.500H6z" fill="#1454b4" /></Glyph>,
  <Glyph label="画线"><path d="M2 16l1.500-5L12 2.500l3.500 3.500L7 14.500z" fill="#f0a030" stroke="#a05c14" /><path d="M12 2.500l3.500 3.500l1-2l-2.500-2.500z" fill="#e86868" /><path d="M2 16l1-3l2 2z" fill="#333" /></Glyph>,
];

const sideIcons3: React.ReactNode[] = [
  <Glyph frame><text x={9} y={12} {...glyphText}>F5</text></Glyph>,
  <Glyph frame label="刷新"><circle cx={9} cy={9} r={5} fill="#8cd890" /><path d="M4 9c1-4 6-5 8-2M14 9c-1 4-6 5-8 2" stroke="#24a03c" strokeWidth={2} /></Glyph>,
];

const sideText = ["1", "5", "15", "30", "60", "日", "周", "月", "N", "多", "季", "年"];

function SideBar() {
  return (
    <Side>
      {sideIcons.map((g, i) => <SideButton key={i}>{g}</SideButton>)}
      <SideRule />
      {sideIcons2.map((g, i) => <SideButton key={i}>{g}</SideButton>)}
      <SideRule />
      {sideIcons3.map((g, i) => <SideButton key={i}>{g}</SideButton>)}
      {sideText.map((t) => <SideButton key={t} $on={t === "日"}>{t}</SideButton>)}
      <ScrollThumb />
    </Side>
  );
}

/* ---------- dialog ---------- */

type Node = { level: 0 | 1 | 2; text: string; open?: boolean; selected?: boolean; last?: boolean };
const nodes: Node[] = [
  ...["神系", "龙系", "鬼系", "其他系", "特色型"].map((text): Node => ({ level: 1, text })),
  { level: 1, text: "其他类型", last: true },
  { level: 0, text: "条件选股公式", open: true },
  ...["指标条件", "基本面", "即时盘中", "走势特征", "形态特征"].map((text): Node => ({ level: 1, text })),
  { level: 1, text: "其他类型", open: true, selected: true, last: true },
  ...["大顺均线   (用户)", "攻击   (用户)", "20大年   (用户)", "小底   （日庄家小6 ) (用户)", "中底   (用户)",
    "庄家大散户   (日庄家大散户 ) (用户)", "日MACD叉   (用户)", "日M零叉   (用户)", "庄家穿散户   (用户)", "月时间6   (用户)",
    "月时间16   (用户)", "月36   (用户)", "恭喜发财   (用户)"].map((text): Node => ({ level: 2, text })),
  { level: 2, text: "大均线   （ 60>120>250)(用户)", last: true },
];

function Guides({ node }: { node: Node }) {
  const width = [39, 58, 77][node.level];
  const x = [9, 28, 47][node.level];
  return (
    <svg width={width} height={20} fill="none" shapeRendering="crispEdges">
      <g stroke="#808080" strokeDasharray="1 1">
        <path d="M9.500 0V20" />
        {node.level > 0 && <path d={`M${x}.5 0V${node.last ? 10 : 20}`} />}
        <path d={`M${x} 10.500h${node.level === 2 ? 10 : 12}`} />
      </g>
      {node.level < 2 && (
        <g>
          <rect x={x - 3.500} y={6.500} width={8} height={8} fill="#fff" stroke="#808080" />
          <path d={`M${x - 2} 10.500h5${node.open ? "" : `M${x}.5 8v5`}`} stroke="#000" />
        </g>
      )}
      {node.level === 0 && (
        <g>
          <path d="M20.500 5.500l1-2h5l1 2h6v9h-13z" fill="#fcf080" stroke="#a09020" />
          <path d="M34.500 6v9.500h-13" stroke="#000" />
        </g>
      )}
      {node.level === 1 && (
        <g stroke="#000" shapeRendering="auto">
          <circle cx={52} cy={9} r={3} /><path d="M49 9.500h-5M46 9.500v1" /><circle cx={43} cy={10} r={1} />
        </g>
      )}
      {node.level === 2 && (
        <g shapeRendering="auto">
          <path d="M59.500 5V2.500h4V5" stroke="#444" />
          <rect x={58.500} y={4.500} width={6} height={6} fill="#eee" stroke="#333" /><rect x={61} y={7} width={2} height={2} fill="#222" />
          <path d="M59 12.500h6M62 14.500h4" stroke="#888" />
          <path d="M70 5l4 5l-4 6l-4-6z" fill="#e014d0" stroke="#500850" />
        </g>
      )}
    </svg>
  );
}

function FormulaManager() {
  return (
    <Dialog role="dialog" aria-labelledby="fm-title">
      <DialogTitle>
        <span id="fm-title">公式管理器V6.04</span>
        <button aria-label="关闭窗口">
          <svg width={10} height={10}><path d="M.5 .5l9 9M9.500 .5l-9 9" stroke="#fff" /></svg>
        </button>
      </DialogTitle>
      <DialogBody>
        <TreeSide>
          <Tabs role="tablist">
            <Tab role="tab" aria-selected $on $w={51}>公式组</Tab>
            <Tab role="tab" $w={47}>全部</Tab>
            <Tab role="tab" $w={48}>系统</Tab>
            <Tab role="tab" $w={48}>用户</Tab>
            <Tab role="tab" $w={72}>按日期频度</Tab>
          </Tabs>
          <Tree>
            {nodes.map((n, i) => (
              <TreeRow key={i}>
                <Guides node={n} />
                <TreeLabel $on={n.selected}>{n.text}</TreeLabel>
              </TreeRow>
            ))}
            <Track><Thumb /></Track>
          </Tree>
        </TreeSide>
        <Actions>
          <ActionGroup $gap={5} $after={13}>
            <ActionPair $cols="1fr 11px"><Action>新  建</Action><Action>↓</Action></ActionPair>
            <Action disabled>修  改</Action>
            <Action disabled>删  除</Action>
            <ActionPair $cols="1fr 1fr"><Action disabled>上移</Action><Action disabled>下移</Action></ActionPair>
          </ActionGroup>
          <ActionGroup $gap={5} $after={93}>
            <Action disabled>加入常用</Action>
            <Action>查找(F3)</Action>
            <Action>预  览</Action>
            <CheckLabel><input type="checkbox" />关联预览</CheckLabel>
          </ActionGroup>
          <ActionGroup $gap={5} $after={18}>
            <Action>导出公式</Action>
            <Action>快速导出</Action>
            <Action>导入公式</Action>
            <Action>临时导入</Action>
          </ActionGroup>
          <ActionGroup $gap={4} $after={0}>
            <Action>DLL函数</Action>
            <Action>公式恢复</Action>
            <Action>界面设置</Action>
            <Action>关  闭</Action>
          </ActionGroup>
        </Actions>
      </DialogBody>
      <DialogFoot>
        <span>系统公式提供常用指标及模型的实现样本,不表示操作建议.</span>
        <a href="#forum">访问通达信公式讨论区</a>
      </DialogFoot>
    </Dialog>
  );
}

/* ---------- page ---------- */

export default function App() {
  return (
    <Page>
      <Global />
      <TopBar>
        <Logo viewBox="0 0 17 20"><rect width={17} height={16} rx={2} fill="#c8141c" /><path d="M3 3l5 3l7-3l-8 9l-4-2z" fill="#fff" /></Logo>
        <AppName>通达信金融终端</AppName>
        {["行情", "市场", "资讯", "发现", "交易", "问达", "圈子"].map((m) => <MenuItem key={m}>{m}</MenuItem>)}
        <LoginState>证券交易未登录  中国卫通</LoginState>
        {["功能", "版面", "公式"].map((m) => <SmallMenuItem key={m}>{m}</SmallMenuItem>)}
        <SmallMenuItem $w={42}>选项</SmallMenuItem>
        <SmallMenuItem $w={56} aria-label="消息">
          <svg width={14} height={20} fill="none" stroke="#333"><path d="M2 4v8l3 3h6l2-3V6" /><path d="M6 10l4 2l2-4" /></svg>
        </SmallMenuItem>
        <SmallMenuItem $w={64}>游客</SmallMenuItem>
        <Clock>20:20:45 周日</Clock>
        <WindowButton aria-label="返回"><svg width={14} height={20} fill="none" stroke="#333" strokeWidth={2}><path d="M8 4l-5 5l7 7" /></svg></WindowButton>
        <WindowButton aria-label="最小化"><svg width={14} height={20} fill="none" stroke="#333" strokeWidth={2}><path d="M3 9h9" /></svg></WindowButton>
        <WindowButton aria-label="还原"><svg width={14} height={20} fill="none" stroke="#333" strokeWidth={2}><path d="M2 6h7v8H2zM5 6V3h7v8H9" /></svg></WindowButton>
        <WindowButton aria-label="退出"><svg width={14} height={20} fill="none" stroke="#333" strokeWidth={2}><path d="M2 3l10 10M12 3L2 13" /></svg></WindowButton>
      </TopBar>
      <Body>
        <Workspace>
          <PeriodBar>
            <LayoutToggle aria-label="布局">
              <svg width={13} height={12} fill="none"><rect x={0.500} y={0.500} width={11} height={10} rx={1} stroke="#888" /><rect x={7} y={2} width={3} height={7} fill="#999" /></svg>
            </LayoutToggle>
            <Periods>
              {["分时", "1分钟", "5分钟", "15分钟", "30分钟", "60分钟", "日线", "周线", "月线", "多周期", "更多 >"].map((p) => (
                <Period key={p} $on={p === "日线"}>{p}</Period>
              ))}
            </Periods>
            {["复权", "叠加", "多股", "统计", "画线", "F10", "标记", "+自选", "返回"].map((t) => <Tool key={t}>{t}</Tool>)}
          </PeriodBar>
          <Panel>
            <PriceChart />
            <Legend>
              <LegendItem $c="#c8c8c8" $w={276}>中国卫通</LegendItem>
              <LegendItem $c="#c832c8" $w={74}>MA20: 13.38</LegendItem>
              <LegendItem $c="#32dc32" $w={72}>MA60: 12.43</LegendItem>
              <LegendItem $c="#c8c8c8" $w={79}>MA120: 11.85</LegendItem>
              <LegendItem $c="#2020c8">MA250: 11.49</LegendItem>
            </Legend>
          </Panel>
          <Panel>
            <IndicatorChart />
            <Legend>
              <LegendItem $c="#999" $w={15}>
                <svg width={12} height={18} fill="none"><circle cx={5} cy={9} r={5} fill="#888" /><path d="M2 8l3 3l3-3" stroke="#000" /></svg>
              </LegendItem>
              <LegendItem $c="#c8c8c8" $w={483}>神</LegendItem>
              <LegendItem $c="#4cb44c" $w={121}>散户线: 6.36</LegendItem>
              <LegendItem $c="#fff" $w={131}>CDMA: 11.68</LegendItem>
              <LegendItem $c="#888" $w={106}>MAVOL32: -115.80</LegendItem>
              <LegendItem $c="#40d8d8" $w={106}>MAVOL22: -102.93</LegendItem>
              <LegendItem $c="#fcfc40" $w={99}>MAVOL12: -97.15</LegendItem>
              <LegendItem $c="#c01c1c" $w={155}>: 0.00</LegendItem>
              <LegendItem $c="#fcfc54">: 100.00</LegendItem>
            </Legend>
          </Panel>
        </Workspace>
        <QuotePanel />
        <SideBar />
      </Body>
      <Plate $x={1} $y={448} $w={806} $h={25} $lh={23} $bg="#330066"><LegendItem $c="#e0d8f0">电</LegendItem></Plate>
      <Plate $x={2} $y={849} $w={273} $h={31} $lh={34} $bg="#90005f">神龙打板先锋A珍藏版 ----   2W   --- 财富---</Plate>
      <FormulaManager />
      <Watermark aria-hidden="true">
        {[0, 1, 2, 3].map((r) => [0, 1, 2, 3, 4, 5, 6].map((c) => (
          <text key={`${r}-${c}`} transform={`translate(${285 * c} ${215 + 220 * r}) rotate(-45)`} fontSize={23} fill="#888888" fillOpacity={0.26}>www.cfchi.com</text>
        )))}
      </Watermark>
      <ArrowLayer viewBox="0 0 1400 840" aria-hidden="true">
        <path d="M210 786L1366 818L1364 812L1381 822L1364 831L1366 827L210 787z" fill="#fc2414" />
      </ArrowLayer>
      <Fortune $x={30} $y={28} $w={291} $h={88} $bg="#ff2e28">恭喜发财</Fortune>
      <Slogan $x={62} $y={144} $w={223} $h={45} $bg="#005cc4" $size={34} $lh={34}>系统备有选股</Slogan>
      <Slogan $x={977} $y={855} $w={412} $h={31} $bg="#00c0c4" $size={24} $lh={25}>为提高成功率，不懂地方尽量咨询我们</Slogan>
    </Page>
  );
}
